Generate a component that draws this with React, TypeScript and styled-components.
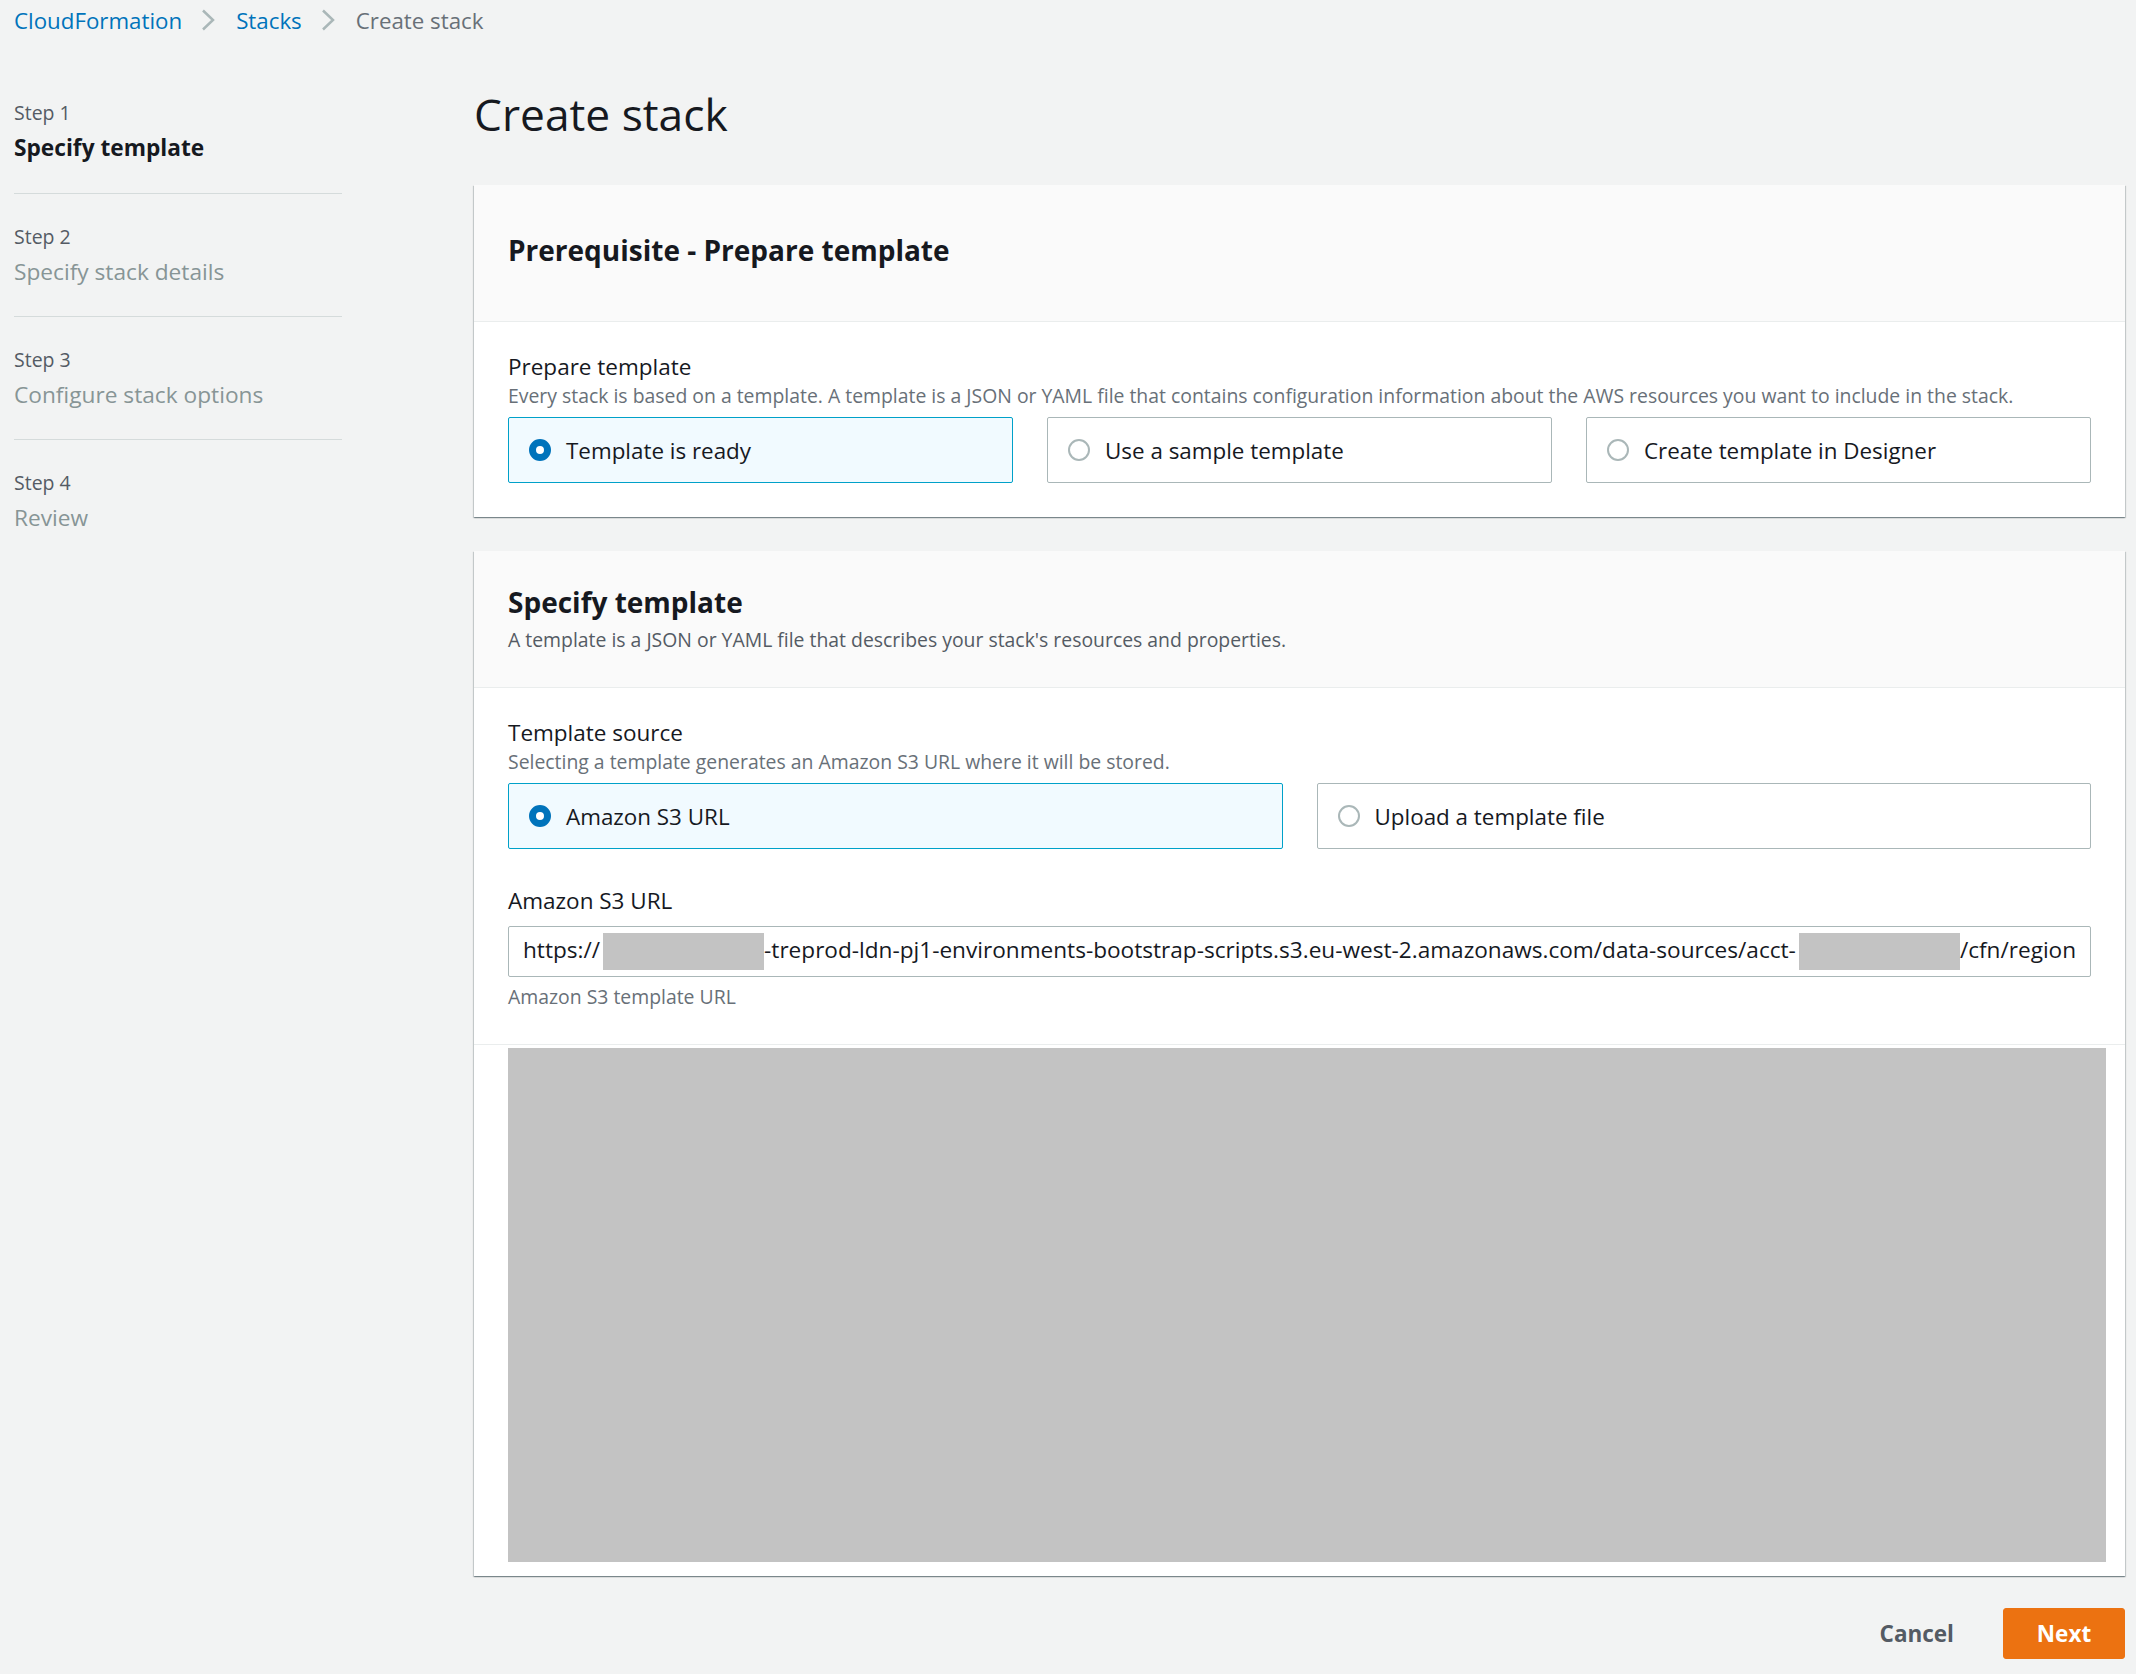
import * as React from 'react';
import styled, { createGlobalStyle } from 'styled-components';

const GlobalStyle = createGlobalStyle`
    html, body {
        margin: 0;
        padding: 0;
        background: #f2f3f3;
        font-family: "Open Sans", "Noto Sans", Arial, sans-serif;
        color: #16191f;
    }
    * {
        box-sizing: border-box;
    }
`;

const Page = styled.div`
    min-height: 1674px;
    padding: 0 11px 0 14px;
`;

const Breadcrumbs = styled.nav`
    display: flex;
    align-items: center;
    height: 40px;
    font-size: 22.3px;
`;

const Crumb = styled.span<{ $current?: boolean }>`
    color: ${(p) => (p.$current ? '#687078' : '#0073bb')};
`;

const Chevron = styled.svg`
    width: 14px;
    height: 22px;
    margin: 0 21px 0 19px;
`;

const Layout = styled.div`
    display: grid;
    grid-template-columns: 328px minmax(0, 1fr);
    column-gap: 132px;
`;

const Sidebar = styled.ol`
    list-style: none;
    margin: 0;
    padding: 60px 0 0;
`;

const StepItem = styled.li`
    padding: 0 0 30px;
    & + & {
        border-top: 1px solid #d5dbdb;
        padding-top: 30px;
        padding-bottom: 29px;
    }
`;

const StepLabel = styled.div`
    font-size: 19.5px;
    line-height: 26px;
    color: #545b64;
    margin-bottom: 7px;
`;

const StepTitle = styled.div<{ $active?: boolean }>`
    font-size: 22.7px;
    line-height: 30px;
    font-weight: ${(p) => (p.$active ? 700 : 400)};
    color: ${(p) => (p.$active ? '#16191f' : '#879596')};
`;

const Main = styled.main`
    display: flex;
    flex-direction: column;
    min-width: 0;
`;

const PageTitle = styled.h1`
    margin: 46px 0 43px;
    font-size: 44.3px;
    line-height: 56px;
    font-weight: 400;
    color: #16191f;
`;

const Panel = styled.section`
    background: #fff;
    box-shadow: 0 1px 1px 0 rgba(0, 28, 36, 0.3),
        1px 1px 1px 0 rgba(0, 28, 36, 0.15),
        -1px 1px 1px 0 rgba(0, 28, 36, 0.15);
    & + & {
        margin-top: 34px;
    }
`;

const PanelHeader = styled.header<{ $lift?: number }>`
    min-height: 137px;
    display: flex;
    flex-direction: column;
    justify-content: center;
    padding: 0 34px ${(p) => p.$lift ?? 0}px;
    background: #fafafa;
    border-bottom: 1px solid #eaeded;
`;

const PanelTitle = styled.h2`
    margin: 0;
    font-size: 28px;
    line-height: 36px;
    font-weight: 700;
    color: #16191f;
`;

const PanelDescription = styled.p`
    margin: 6px 0 0;
    font-size: 19.4px;
    line-height: 28px;
    color: #545b64;
`;

const PanelBody = styled.div`
    padding: 30px 34px 34px;
`;

const FieldSection = styled.div`
    padding: 30px 34px 33px;
    border-bottom: 1px solid #eaeded;
`;

const Field = styled.div`
    & + & {
        margin-top: 37px;
    }
`;

const Label = styled.div`
    font-size: 22.5px;
    line-height: 30px;
    color: #16191f;
`;

const Hint = styled.div<{ $gap?: number }>`
    font-size: 19.4px;
    line-height: 28px;
    color: #687078;
    margin-top: ${(p) => p.$gap ?? 0}px;
`;

const Tiles = styled.div<{ $cols: number }>`
    display: grid;
    grid-template-columns: repeat(${(p) => p.$cols}, 1fr);
    column-gap: 34px;
    margin-top: 7px;
`;

const Tile = styled.label<{ $selected?: boolean }>`
    display: flex;
    align-items: center;
    height: 66px;
    padding: 0 19px 0 20px;
    border: 1px solid ${(p) => (p.$selected ? '#00a1c9' : '#aab7b8')};
    border-radius: 2px;
    background: ${(p) => (p.$selected ? '#f1faff' : '#fff')};
    font-size: 22.4px;
    color: #16191f;
    cursor: pointer;
`;

const Radio = styled.span<{ $checked?: boolean }>`
    flex: none;
    width: 22px;
    height: 22px;
    border-radius: 50%;
    background: #fff;
    border: ${(p) => (p.$checked ? '7px solid #0073bb' : '2px solid #aab7b8')};
    margin-right: 15px;
`;

const UrlField = styled.div`
    display: flex;
    align-items: center;
    height: 51px;
    margin-top: 10px;
    padding: 0 14px;
    border: 1px solid #aab7b8;
    border-radius: 2px;
    background: #fff;
    font-size: 22.6px;
    color: #16191f;
`;

const UrlText = styled.div`
    flex: 1;
    min-width: 0;
    overflow: hidden;
    white-space: nowrap;
`;

const Redacted = styled.span<{ $w: number }>`
    display: inline-block;
    width: ${(p) => p.$w}px;
    height: 37px;
    margin-left: 3px;
    vertical-align: middle;
    background: #c3c3c3;
`;

const RedactedSection = styled.div`
    padding: 3px 19px 14px 34px;
`;

const RedactedBlock = styled.div`
    height: 514px;
    background: #c3c3c3;
`;

const Actions = styled.div`
    display: flex;
    justify-content: flex-end;
    align-items: center;
    margin-top: 32px;
    gap: 29px;
`;

const LinkButton = styled.button`
    border: none;
    background: none;
    padding: 0 20px;
    height: 51px;
    font-family: inherit;
    font-size: 22.5px;
    font-weight: 700;
    color: #545b64;
    cursor: pointer;
`;

const PrimaryButton = styled.button`
    width: 122px;
    height: 51px;
    border: 1px solid #ec7211;
    border-radius: 3px;
    background: #ec7211;
    font-family: inherit;
    font-size: 22.5px;
    font-weight: 700;
    color: #fff;
    cursor: pointer;
`;

function ChevronIcon() {
    return (
        <Chevron viewBox="0 0 14 22" fill="none">
            <path d="M2 1.5L12 11L2 20.5" stroke="#aab7b8" strokeWidth="2.5" />
        </Chevron>
    );
}

const steps = [
    { label: 'Step 1', title: 'Specify template' },
    { label: 'Step 2', title: 'Specify stack details' },
    { label: 'Step 3', title: 'Configure stack options' },
    { label: 'Step 4', title: 'Review' },
];

const prepareOptions = ['Template is ready', 'Use a sample template', 'Create template in Designer'];
const sourceOptions = ['Amazon S3 URL', 'Upload a template file'];

export default function App(): JSX.Element {
    const [prepare, setPrepare] = React.useState(0);
    const [source, setSource] = React.useState(0);

    return (
        <Page>
            <GlobalStyle />
            <Breadcrumbs>
                <Crumb>CloudFormation</Crumb>
                <ChevronIcon />
                <Crumb>Stacks</Crumb>
                <ChevronIcon />
                <Crumb $current>Create stack</Crumb>
            </Breadcrumbs>
            <Layout>
                <Sidebar>
                    {steps.map((s, i) => (
                        <StepItem key={s.label}>
                            <StepLabel>{s.label}</StepLabel>
                            <StepTitle $active={i === 0}>{s.title}</StepTitle>
                        </StepItem>
                    ))}
                </Sidebar>
                <Main>
                    <PageTitle>Create stack</PageTitle>

                    <Panel>
                        <PanelHeader $lift={6}>
                            <PanelTitle>Prerequisite - Prepare template</PanelTitle>
                        </PanelHeader>
                        <PanelBody>
                            <Label>Prepare template</Label>
                            <Hint>
                                Every stack is based on a template. A template is a JSON or YAML file that
                                contains configuration information about the AWS resources you want to include
                                in the stack.
                            </Hint>
                            <Tiles $cols={3}>
                                {prepareOptions.map((o, i) => (
                                    <Tile key={o} $selected={prepare === i} onClick={() => setPrepare(i)}>
                                        <Radio $checked={prepare === i} />
                                        {o}
                                    </Tile>
                                ))}
                            </Tiles>
                        </PanelBody>
                    </Panel>

                    <Panel>
                        <PanelHeader>
                            <PanelTitle>Specify template</PanelTitle>
                            <PanelDescription>
                                A template is a JSON or YAML file that describes your stack's resources and
                                properties.
                            </PanelDescription>
                        </PanelHeader>
                        <FieldSection>
                            <Field>
                                <Label>Template source</Label>
                                <Hint>Selecting a template generates an Amazon S3 URL where it will be stored.</Hint>
                                <Tiles $cols={2}>
                                    {sourceOptions.map((o, i) => (
                                        <Tile key={o} $selected={source === i} onClick={() => setSource(i)}>
                                            <Radio $checked={source === i} />
                                            {o}
                                        </Tile>
                                    ))}
                                </Tiles>
                            </Field>
                            <Field>
                                <Label>Amazon S3 URL</Label>
                                <UrlField>
                                    <UrlText>
                                        https://
                                        <Redacted $w={161} />
                                        -treprod-ldn-pj1-environments-bootstrap-scripts.s3.eu-west-2.amazonaws.com/data-sources/acct-
                                        <Redacted $w={161} />
                                        /cfn/regions/template.yaml
                                    </UrlText>
                                </UrlField>
                                <Hint $gap={6}>Amazon S3 template URL</Hint>
                            </Field>
                        </FieldSection>
                        <RedactedSection>
                            <RedactedBlock />
                        </RedactedSection>
                    </Panel>

                    <Actions>
                        <LinkButton>Cancel</LinkButton>
                        <PrimaryButton>Next</PrimaryButton>
                    </Actions>
                </Main>
            </Layout>
        </Page>
    );
}
